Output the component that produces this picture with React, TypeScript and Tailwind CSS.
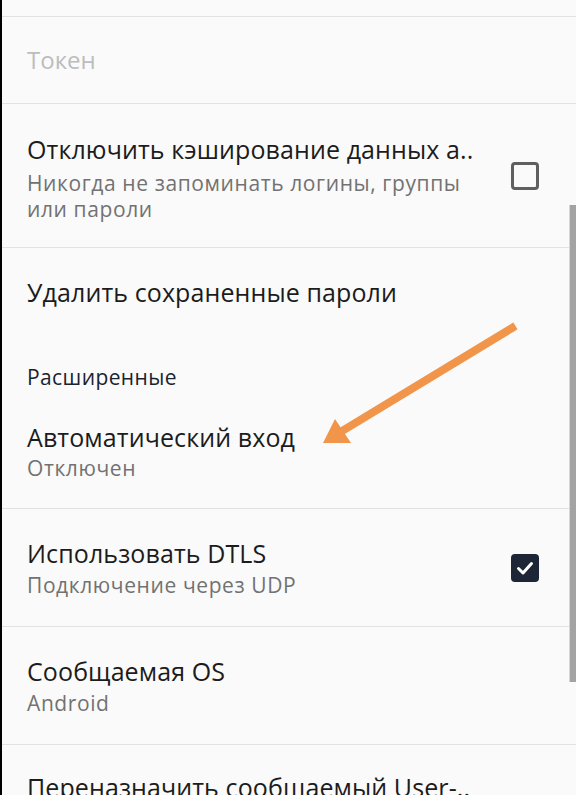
import React from "react";

const font = { fontFamily: "'Open Sans', 'Noto Sans', sans-serif" };

const titleCls = "text-[25px] leading-[32px] tracking-[0.1px] text-[#1c1c1c] whitespace-nowrap";
const subCls = "text-[21px] leading-[26px] tracking-[0.6px] text-[#727272]";

function Checkbox({ checked }: { checked: boolean }) {
  if (checked) {
    return (
      <div className="w-[28px] h-[28px] rounded-[4px] bg-[#1c2636] flex items-center justify-center">
        <svg width="20" height="20" viewBox="0 0 20 20" fill="none">
          <path d="M3.5 10.5 L8 15 L16.5 5.5" stroke="#ffffff" strokeWidth="3" strokeLinecap="round" strokeLinejoin="round" />
        </svg>
      </div>
    );
  }
  return <div className="w-[28px] h-[28px] rounded-[4px] border-[3px] border-[#5f5f5f]" />;
}

function Row({
  title,
  subtitle,
  checked,
  className,
  pad,
}: {
  title: string;
  subtitle?: string;
  checked?: boolean;
  className: string;
  pad: string;
}) {
  return (
    <div className={`flex items-center border-b border-[#e2e2e2] pl-[25px] pr-[37px] ${className}`}>
      <div className={`flex-1 self-start ${pad}`}>
        <div className={titleCls}>{title}</div>
        {subtitle && <div className={`mt-[3px] ${subCls}`}>{subtitle}</div>}
      </div>
      {checked !== undefined && <Checkbox checked={checked} />}
    </div>
  );
}

export default function App() {
  return (
    <div className="relative w-[576px] h-[795px] overflow-hidden bg-[#fafafa] border-l-2 border-black" style={font}>
      <div className="h-[17px] border-b border-[#e2e2e2]" />

      <div className="h-[87px] flex items-center pl-[25px] border-b border-[#e2e2e2]">
        <span className="text-[24px] leading-[32px] text-[#bdbdbd]">Токен</span>
      </div>

      <div className="h-[144px] flex items-center border-b border-[#e2e2e2] pl-[25px] pr-[37px]">
        <div className="flex-1 self-start pt-[29px]">
          <div className={titleCls}>Отключить кэширование данных а..</div>
          <div className={`mt-[5px] w-[445px] ${subCls}`}>Никогда не запоминать логины, группы или пароли</div>
        </div>
        <Checkbox checked={false} />
      </div>

      <div className="h-[88px] flex items-center pl-[25px]">
        <span className={titleCls}>Удалить сохраненные пароли</span>
      </div>

      <div className="h-[173px] border-b border-[#e2e2e2] pl-[25px] pt-[27px]">
        <div className="text-[21px] leading-[28px] tracking-[0.4px] font-medium text-[#1b2330]">Расширенные</div>
        <div className={`mt-[30px] ${titleCls}`}>Автоматический вход</div>
        <div className={`mt-[2px] ${subCls}`}>Отключен</div>
      </div>

      <Row className="h-[118px]" pad="pt-[28px]" title="Использовать DTLS" subtitle="Подключение через UDP" checked={true} />
      <Row className="h-[118px]" pad="pt-[28px]" title="Сообщаемая OS" subtitle="Android" />
      <Row className="h-[80px] border-b-0" pad="pt-[26px]" title="Переназначить сообщаемый User-.." />

      {/* scrollbar thumb */}
      <div className="absolute right-0 top-[205px] w-[7px] h-[477px] bg-[#a3a3a3] border-l border-[#d6d6d6]" />

      {/* annotation arrow */}
      <svg className="absolute left-0 top-0 pointer-events-none" width="576" height="795" viewBox="0 0 576 795">
        <line x1="510" y1="328" x2="340" y2="431" stroke="#f0954a" strokeWidth="8" strokeLinecap="square" />
        <polygon points="321,443 333,419 349,443" fill="#f0954a" />
      </svg>
    </div>
  );
}
